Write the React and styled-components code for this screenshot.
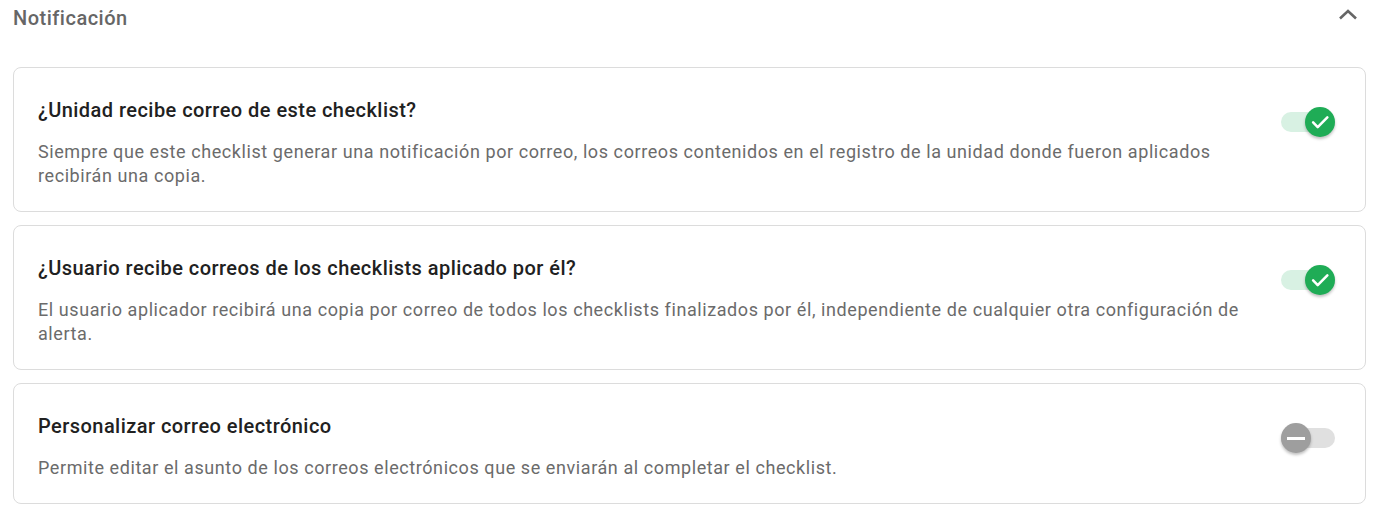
import React, {useState} from 'react'
import styled, {createGlobalStyle} from 'styled-components'

const GlobalStyle = createGlobalStyle`
    body {
        margin: 0;
        background: #fff;
        font-family: Roboto, "Liberation Sans", Arial, sans-serif;
    }
`;

const settings = [
    {
        id: 'unidad',
        title: '¿Unidad recibe correo de este checklist?',
        description: 'Siempre que este checklist generar una notificación por correo, los correos contenidos en el registro de la unidad donde fueron aplicados recibirán una copia.',
        on: true
    },
    {
        id: 'usuario',
        title: '¿Usuario recibe correos de los checklists aplicado por él?',
        description: 'El usuario aplicador recibirá una copia por correo de todos los checklists finalizados por él, independiente de cualquier otra configuración de alerta.',
        on: true
    },
    {
        id: 'personalizar',
        title: 'Personalizar correo electrónico',
        description: 'Permite editar el asunto de los correos electrónicos que se enviarán al completar el checklist.',
        on: false
    }
];

const Toggle = ({on, onClick}) => (
    <SwitchButton type="button" role="switch" aria-checked={on} onClick={onClick}>
        <Track $on={on}/>
        <Thumb $on={on}>
            {on ? (
                <svg width="22" height="22" viewBox="0 0 24 24">
                    <path d="M4.5 12.5l5 5L20 7" fill="none" stroke="#fff" strokeWidth="2.8" strokeLinecap="round" strokeLinejoin="round"/>
                </svg>
            ) : (
                <Minus/>
            )}
        </Thumb>
    </SwitchButton>
);

const App = () => {
    const [open, setOpen] = useState(true);
    const [values, setValues] = useState(settings.map(s => s.on));

    const flip = i => setValues(values.map((v, idx) => idx === i ? !v : v));

    return (
        <Page>
            <GlobalStyle/>
            <Header>
                <Heading>Notificación</Heading>
                <CollapseButton type="button" onClick={() => setOpen(!open)} aria-label="Contraer">
                    <svg width="20" height="12" viewBox="0 0 20 12" style={{transform: open ? 'none' : 'rotate(180deg)'}}>
                        <polyline points="2,9.5 10,2 18,9.5" fill="none" stroke="#666" strokeWidth="2.6"/>
                    </svg>
                </CollapseButton>
            </Header>
            {open &&
            <CardList>
                {settings.map((s, i) => (
                    <Card key={s.id}>
                        <TextBlock>
                            <Title>{s.title}</Title>
                            <Description>{s.description}</Description>
                        </TextBlock>
                        <Toggle on={values[i]} onClick={() => flip(i)}/>
                    </Card>
                ))}
            </CardList>}
        </Page>
    )
};

const Page = styled.div`
    padding: 0 18px 0 13px;
`;

const Header = styled.div`
    display: flex;
    align-items: center;
    justify-content: space-between;
    height: 36px;
    margin-bottom: 31px;
`;

const Heading = styled.h2`
    margin: 0;
    font-size: 20px;
    font-weight: 500;
    color: #666;
    letter-spacing: 0.5px;
`;

const CollapseButton = styled.button`
    display: flex;
    align-items: center;
    justify-content: center;
    background: transparent;
    border: none;
    padding: 0;
    width: 28px;
    height: 28px;
    margin: -7px 4px 0 0;
    cursor: pointer;
`;

const CardList = styled.div`
    display: flex;
    flex-direction: column;
    gap: 13px;
`;

const Card = styled.div`
    display: flex;
    align-items: flex-start;
    gap: 32px;
    border: 1px solid #dcdcdc;
    border-radius: 8px;
    padding: 30px 28px 23px 24px;
`;

const TextBlock = styled.div`
    flex: 1;
`;

const Title = styled.div`
    font-size: 20px;
    line-height: 24px;
    font-weight: 500;
    color: #212121;
    letter-spacing: 0.45px;
    margin-bottom: 18px;
`;

const Description = styled.div`
    font-size: 18px;
    line-height: 24px;
    color: #6b6b6b;
    letter-spacing: 0.58px;
`;

const SwitchButton = styled.button`
    position: relative;
    flex: none;
    width: 58px;
    height: 48px;
    background: transparent;
    border: none;
    padding: 0;
    cursor: pointer;
`;

const Track = styled.span`
    position: absolute;
    left: 2px;
    right: 2px;
    top: 14px;
    height: 20px;
    border-radius: 10px;
    background: ${p => p.$on ? '#d8f1e3' : '#e0e0e0'};
`;

const Thumb = styled.span`
    position: absolute;
    top: 9px;
    left: ${p => p.$on ? '26px' : '2px'};
    width: 30px;
    height: 30px;
    border-radius: 50%;
    display: flex;
    align-items: center;
    justify-content: center;
    background: ${p => p.$on ? '#1fac56' : '#9e9e9e'};
    box-shadow: 0 2px 3px rgba(0, 0, 0, 0.25);
`;

const Minus = styled.span`
    width: 18px;
    height: 3px;
    background: #fff;
`;

export default App
